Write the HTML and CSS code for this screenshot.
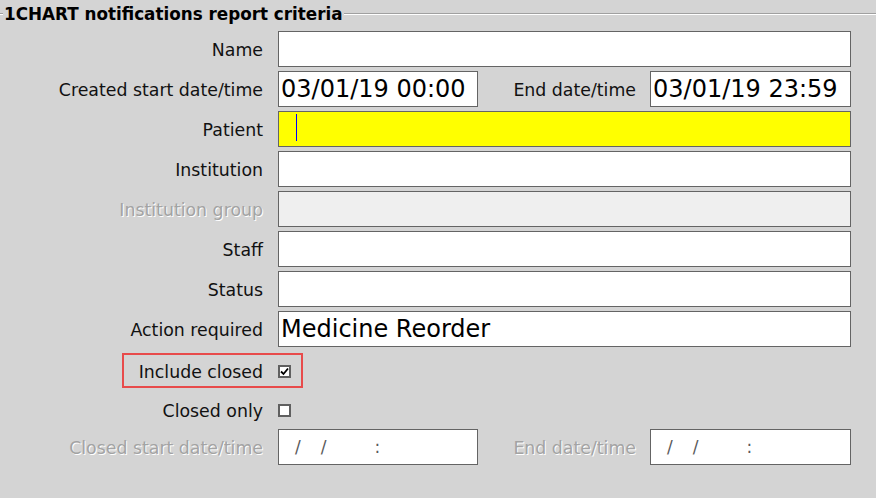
FILE: index.html
```html
<!DOCTYPE html>
<html lang="en">
<head>
    <meta charset="UTF-8">
    <meta name="viewport" content="width=device-width, initial-scale=1.0">
    <title>1CHART notifications report</title>
    <link rel="stylesheet" href="styles.css">
</head>
<body>
    <div class="criteria">
        <div class="legend-row">
            <span class="legend-lead"></span>
            <span class="legend">1CHART notifications report criteria</span>
            <span class="legend-line"></span>
        </div>

        <div class="form">
            <div class="label">Name</div>
            <div class="field"></div>

            <div class="label">Created start date/time</div>
            <div class="date-pair">
                <div class="field date-field">03/01/19 00:00</div>
                <div class="sub-label">End date/time</div>
                <div class="field date-field end">03/01/19 23:59</div>
            </div>

            <div class="label">Patient</div>
            <div class="field focused"><span class="caret"></span></div>

            <div class="label">Institution</div>
            <div class="field"></div>

            <div class="label disabled">Institution group</div>
            <div class="field locked"></div>

            <div class="label">Staff</div>
            <div class="field"></div>

            <div class="label">Status</div>
            <div class="field"></div>

            <div class="label">Action required</div>
            <div class="field">Medicine Reorder</div>

            <div class="label check-label">Include closed</div>
            <div class="check-cell">
                <span class="checkbox">
                    <svg width="9" height="9" viewBox="0 0 9 9"><path d="M1 4.5 L3.5 7 L8 1.5" fill="none" stroke="#000" stroke-width="1.8"/></svg>
                </span>
            </div>

            <div class="label check-label">Closed only</div>
            <div class="check-cell">
                <span class="checkbox"></span>
            </div>

            <div class="label disabled">Closed start date/time</div>
            <div class="date-pair">
                <div class="field date-field mask"><span>/</span><span class="s2">/</span><span class="s3">:</span></div>
                <div class="sub-label disabled">End date/time</div>
                <div class="field date-field end mask"><span>/</span><span class="s2">/</span><span class="s3">:</span></div>
            </div>

            <div class="highlight"></div>
        </div>
    </div>
</body>
</html>
```

FILE: styles.css
```css
body {
    margin: 0;
    background-color: #d4d4d4;
    font-family: 'DejaVu Sans', Verdana, sans-serif;
    color: #111;
}
.criteria {
    width: 876px;
    height: 498px;
}
.legend-row {
    display: flex;
    align-items: center;
    height: 27px;
}
.legend-lead {
    width: 3px;
    border-top: 1px solid #a0a0a0;
    border-bottom: 1px solid #fff;
}
.legend {
    margin-left: 1px;
    font-size: 16.8px;
    font-weight: bold;
    color: #000;
}
.legend-line {
    flex: 1;
    margin-left: 1px;
    border-top: 1px solid #a0a0a0;
    border-bottom: 1px solid #fff;
}
.form {
    position: relative;
    display: grid;
    grid-template-columns: 263px 573px;
    grid-template-rows: repeat(8, 36px) 35px 35px 36px;
    column-gap: 15px;
    row-gap: 4px;
    padding-top: 4px;
}
.label {
    align-self: center;
    padding-top: 2px;
    text-align: right;
    font-size: 17.35px;
    white-space: nowrap;
}
.label.disabled,
.sub-label.disabled {
    color: #a3a3a3;
    text-shadow: 1px 1px 0 #fff;
}
.field {
    box-sizing: border-box;
    height: 36px;
    border: 1px solid #646464;
    background-color: #fff;
    padding-left: 2px;
    font-size: 24px;
    line-height: 34px;
    color: #000;
    white-space: nowrap;
}
.field.focused {
    background-color: #ffff00;
    padding-left: 17px;
}
.caret {
    display: inline-block;
    width: 1px;
    height: 27px;
    margin-top: 2px;
    background-color: #0000ff;
    vertical-align: top;
}
.field.locked {
    background-color: #efefef;
}
.date-pair {
    display: flex;
    align-items: center;
    gap: 14px;
}
.date-field {
    width: 200px;
}
.date-field.end {
    width: 201px;
}
.sub-label {
    flex: 1;
    padding-top: 2px;
    text-align: right;
    font-size: 17.35px;
    white-space: nowrap;
}
.mask {
    display: flex;
    align-items: center;
    padding-left: 16px;
    font-size: 17px;
    color: #5a5a5a;
}
.mask .s2 {
    margin-left: 20px;
}
.mask .s3 {
    margin-left: 48px;
}
.check-label {
    align-self: stretch;
    display: flex;
    align-items: center;
    justify-content: flex-end;
    padding-top: 6px;
}
.check-cell {
    display: flex;
    align-items: center;
    padding-top: 6px;
}
.checkbox {
    box-sizing: border-box;
    display: flex;
    align-items: center;
    justify-content: center;
    width: 13px;
    height: 13px;
    border: 2px solid #606060;
    background-color: #fff;
}
.highlight {
    position: absolute;
    left: 122px;
    top: 326px;
    box-sizing: border-box;
    width: 181px;
    height: 35px;
    border: 2px solid #e84b4b;
}
```
